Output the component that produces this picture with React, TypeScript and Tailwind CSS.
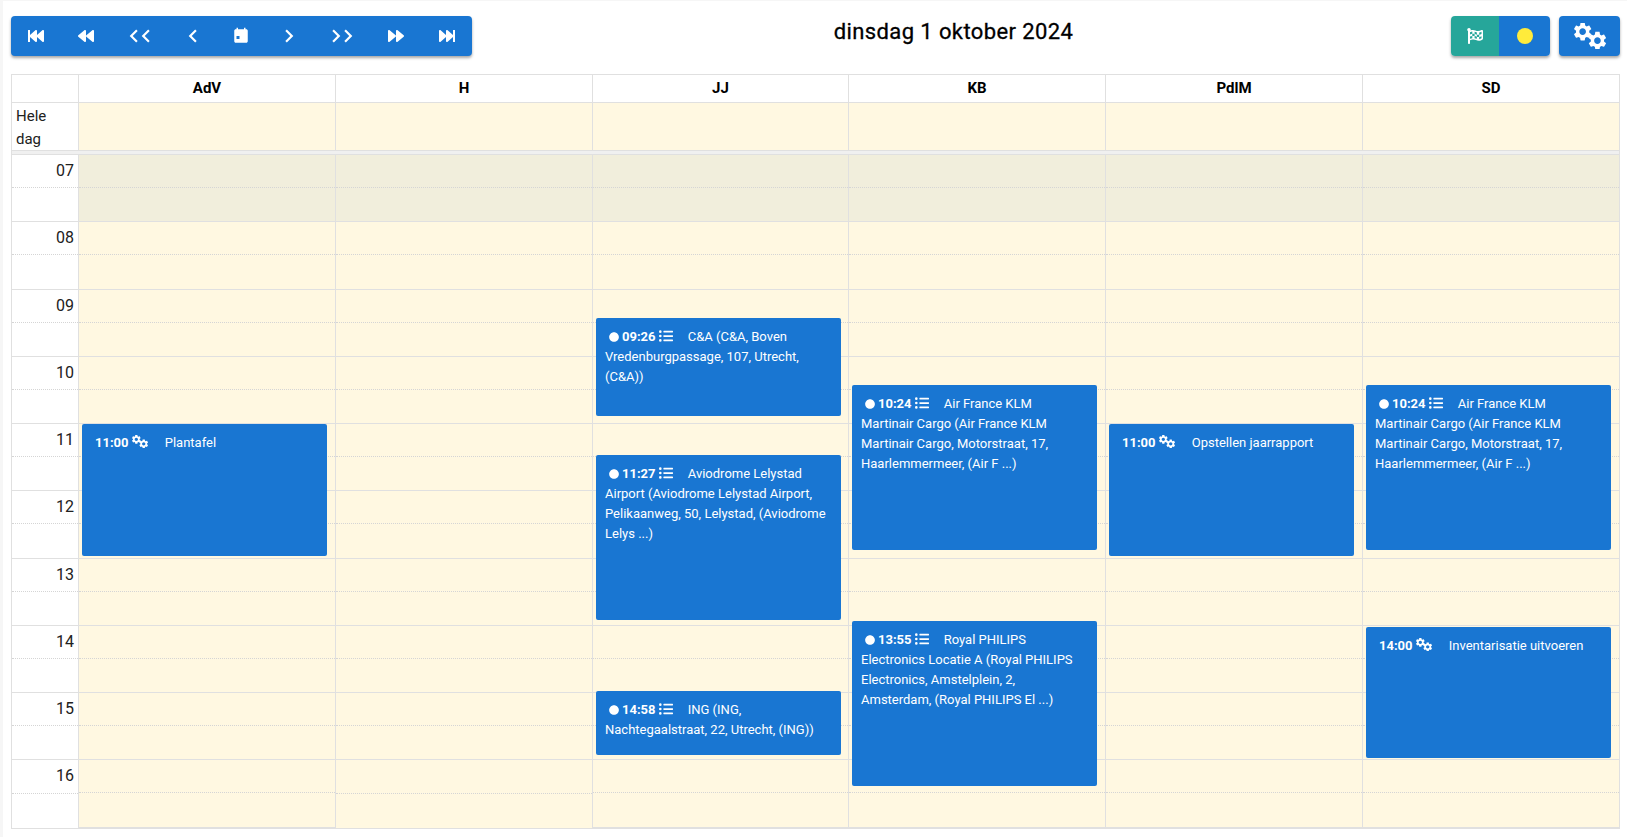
import { FaBackward, FaCircle, FaFastBackward, FaFastForward, FaFlagCheckered, FaForward, FaListUl } from "react-icons/fa"
import { MdChevronLeft, MdChevronRight } from "react-icons/md"

const hours = ["07", "08", "09", "10", "11", "12", "13", "14", "15", "16"]
const HOUR = 67.25
const GEAR =
  "M19.14 12.94c.04-.3.06-.61.06-.94 0-.32-.02-.64-.07-.94l2.03-1.58c.18-.14.23-.41.12-.61l-1.92-3.32c-.12-.22-.37-.29-.59-.22l-2.39.96c-.5-.38-1.03-.7-1.62-.94l-.36-2.54c-.04-.24-.24-.41-.48-.41h-3.84c-.24 0-.43.17-.47.41l-.36 2.54c-.59.24-1.13.57-1.62.94l-2.39-.96c-.22-.08-.47 0-.59.22L2.74 8.87c-.12.21-.08.47.12.61l2.03 1.58c-.05.3-.09.63-.09.94s.02.64.07.94l-2.03 1.58c-.18.14-.23.41-.12.61l1.92 3.32c.12.22.37.29.59.22l2.39-.96c.5.38 1.03.7 1.62.94l.36 2.54c.05.24.24.41.48.41h3.84c.24 0 .44-.17.47-.41l.36-2.54c.59-.24 1.13-.56 1.62-.94l2.39.96c.22.08.47 0 .59-.22l1.92-3.32c.12-.22.07-.47-.12-.61l-2.01-1.58zM12 15.6c-1.98 0-3.6-1.62-3.6-3.6s1.62-3.6 3.6-3.6 3.6 1.62 3.6 3.6-1.62 3.6-3.6 3.6z"

interface CalEvent {
  top: number
  height: number
  time: string
  type: "task" | "visit"
  text: string
}

const columns: { name: string; width: string; events: CalEvent[] }[] = [
  {
    name: "AdV",
    width: "w-[257px]",
    events: [{ top: 269, height: 132, time: "11:00", type: "task", text: "Plantafel" }],
  },
  { name: "H", width: "w-[257px]", events: [] },
  {
    name: "JJ",
    width: "w-[256px]",
    events: [
      { top: 163, height: 98, time: "09:26", type: "visit", text: "C&A (C&A, Boven Vredenburgpassage, 107, Utrecht, (C&A))" },
      { top: 300, height: 165, time: "11:27", type: "visit", text: "Aviodrome Lelystad Airport (Aviodrome Lelystad Airport, Pelikaanweg, 50, Lelystad, (Aviodrome Lelys ...)" },
      { top: 536, height: 64, time: "14:58", type: "visit", text: "ING (ING, Nachtegaalstraat, 22, Utrecht, (ING))" },
    ],
  },
  {
    name: "KB",
    width: "w-[257px]",
    events: [
      { top: 230, height: 165, time: "10:24", type: "visit", text: "Air France KLM Martinair Cargo (Air France KLM Martinair Cargo, Motorstraat, 17, Haarlemmermeer, (Air F ...)" },
      { top: 466, height: 165, time: "13:55", type: "visit", text: "Royal PHILIPS Electronics Locatie A (Royal PHILIPS Electronics, Amstelplein, 2, Amsterdam, (Royal PHILIPS El ...)" },
    ],
  },
  {
    name: "PdlM",
    width: "w-[257px]",
    events: [{ top: 269, height: 132, time: "11:00", type: "task", text: "Opstellen jaarrapport" }],
  },
  {
    name: "SD",
    width: "flex-1",
    events: [
      { top: 230, height: 165, time: "10:24", type: "visit", text: "Air France KLM Martinair Cargo (Air France KLM Martinair Cargo, Motorstraat, 17, Haarlemmermeer, (Air F ...)" },
      { top: 472, height: 131, time: "14:00", type: "task", text: "Inventarisatie uitvoeren" },
    ],
  },
]

function Gears({ className }: { className: string }) {
  return (
    <svg viewBox="0 0 32 26" fill="currentColor" className={className}>
      <path d={GEAR} transform="translate(-2.4 -2.4) scale(0.92)" />
      <path d={GEAR} transform="translate(12.4 6.6) scale(0.92)" />
    </svg>
  )
}

function CalendarToday() {
  return (
    <svg viewBox="0 0 24 24" fill="currentColor" className="size-[18px]">
      <path fillRule="evenodd" d="M6 1h2v2h8V1h2v2h1c1.1 0 2 .9 2 2v14c0 1.1-.9 2-2 2H5c-1.1 0-2-.9-2-2V5c0-1.1.9-2 2-2h1zM6 12v4h4v-4z" />
    </svg>
  )
}

function NavButton({ width, children }: { width: string; children: React.ReactNode }) {
  return <button className={`${width} flex h-full items-center justify-center text-white`}>{children}</button>
}

function DoubleChevron({ dir }: { dir: "left" | "right" }) {
  const Icon = dir === "left" ? MdChevronLeft : MdChevronRight
  return (
    <span className="flex items-center">
      <Icon className="-mr-[7px] size-[26px]" />
      <Icon className="-ml-[7px] size-[26px]" />
    </span>
  )
}

function EventCard({ event }: { event: CalEvent }) {
  return (
    <div
      className="absolute left-[3px] w-[245px] rounded-[2px] bg-[#1976d2] pl-[9px] pr-3 pt-[9px] text-[13px] leading-[20px] text-white"
      style={{ top: event.top, height: event.height }}
    >
      {event.type === "visit" ? (
        <FaCircle className="ml-[4px] mr-[3px] inline size-[10px] align-[-0.5px]" />
      ) : (
        <span className="inline-block w-1" />
      )}
      <span className="font-bold">{event.time}</span>{" "}
      {event.type === "visit" ? (
        <FaListUl className="mr-[15px] inline size-[14px] align-[-2px]" />
      ) : (
        <Gears className="mr-[17px] inline h-[13px] w-4 align-[-1px]" />
      )}
      {event.text}
    </div>
  )
}

export default function App() {
  return (
    <div className="min-h-[837px] border-l-[3px] border-t border-[#f6f6f6] bg-white pl-2 pr-[7px] pt-[15px] font-['Roboto',sans-serif] text-[#212121]">
      {/* Toolbar */}
      <header className="flex h-10 items-start justify-between">
        <div className="flex h-10 w-[461px] items-center rounded bg-[#1976d2] shadow-[0_2px_3px_rgba(0,0,0,0.35)]">
          <NavButton width="w-[50px]"><FaFastBackward className="size-4" /></NavButton>
          <NavButton width="w-[50px]"><FaBackward className="size-4" /></NavButton>
          <NavButton width="w-[58px]"><DoubleChevron dir="left" /></NavButton>
          <NavButton width="w-[48px]"><MdChevronLeft className="size-[26px]" /></NavButton>
          <NavButton width="w-[48px]"><CalendarToday /></NavButton>
          <NavButton width="w-[48px]"><MdChevronRight className="size-[26px]" /></NavButton>
          <NavButton width="w-[58px]"><DoubleChevron dir="right" /></NavButton>
          <NavButton width="w-[50px]"><FaForward className="size-4" /></NavButton>
          <NavButton width="w-[51px]"><FaFastForward className="size-4" /></NavButton>
        </div>
        <h1 className="-ml-[16px] mt-[1px] text-[22px] font-normal leading-[30px] tracking-[0.4px] text-black [-webkit-text-stroke:0.3px_black]">dinsdag 1 oktober 2024</h1>
        <div className="flex gap-[9px]">
          <div className="flex h-10 overflow-hidden rounded shadow-[0_2px_3px_rgba(0,0,0,0.35)]">
            <button className="flex w-12 items-center justify-center bg-[#26a69a] text-white"><FaFlagCheckered className="size-4" /></button>
            <button className="flex w-[51px] items-center justify-center bg-[#1976d2]"><span className="size-4 rounded-full bg-[#ffeb3b]" /></button>
          </div>
          <button className="flex h-10 w-[61px] items-center justify-center rounded bg-[#1976d2] text-white shadow-[0_2px_3px_rgba(0,0,0,0.35)]"><Gears className="h-[26px] w-8" /></button>
        </div>
      </header>

      {/* Calendar */}
      <div className="mt-[18px] w-[1609px] border border-[#e0e0e0]">
        <div className="flex h-[28px] border-b border-[#e0e0e0]">
          <div className="w-[67px] shrink-0 border-r border-[#e0e0e0]" />
          {columns.map((col, i) => (
            <div key={col.name} className={`${col.width} flex items-center justify-center text-[15px] font-bold text-black ${i < 5 ? "border-r border-[#e0e0e0]" : ""}`}>
              {col.name}
            </div>
          ))}
        </div>

        <div className="flex h-[48px] border-b border-[#e0e0e0]">
          <div className="w-[67px] shrink-0 border-r border-[#e0e0e0] px-[4px] pt-[2px] text-[15px] leading-[23px] text-[#212121]">Hele dag</div>
          {columns.map((col, i) => (
            <div key={col.name} className={`${col.width} bg-[#fff8e1] ${i < 5 ? "border-r border-[#e0e0e0]" : ""}`} />
          ))}
        </div>
        <div className="h-[3px] bg-[#f0f0f0]" />

        <div className="flex border-t border-[#e0e0e0]">
          <div className="w-[67px] shrink-0 border-r border-[#e0e0e0]">
            {hours.map((h) => (
              <div key={h} className="border-b border-[#e0e0e0] last:border-b-0" style={{ height: HOUR }}>
                <div className="h-1/2 border-b border-dotted border-[#d5d5d5] pr-[4px] pt-[5px] text-right text-[16px] leading-[22px] text-[#212121]">{h}</div>
              </div>
            ))}
          </div>
          {columns.map((col, i) => (
            <div key={col.name} className={`${col.width} relative ${i < 5 ? "border-r border-[#e0e0e0]" : ""}`}>
              {hours.map((h, j) => (
                <div key={h} className={`border-b border-[#e0e0e0] last:border-b-0 ${j === 0 ? "bg-[#f1eedc]" : "bg-[#fff8e1]"}`} style={{ height: HOUR }}>
                  <div className="h-1/2 border-b border-dotted border-[#d5d5d5]" />
                </div>
              ))}
              {col.events.map((event) => (
                <EventCard key={event.time + event.text} event={event} />
              ))}
            </div>
          ))}
        </div>
      </div>
    </div>
  )
}
